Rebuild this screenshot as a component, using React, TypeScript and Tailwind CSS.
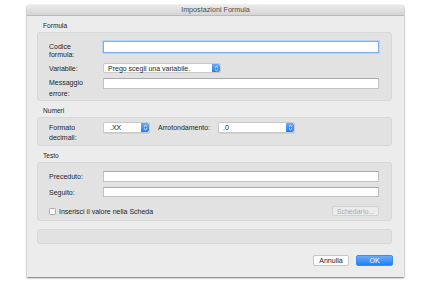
import React from "react";

const font = { fontFamily: '"Liberation Sans", Arial, sans-serif' };

function Stepper() {
  return (
    <div className="w-[8px] h-full bg-gradient-to-b from-[#6aaaf7] to-[#1c7ff4] rounded-r-[2px] flex items-center justify-center">
      <svg width="5" height="7" viewBox="0 0 5 7">
        <path d="M1 2.6 L2.5 1.2 L4 2.6" stroke="white" strokeWidth="0.8" fill="none" />
        <path d="M1 4.4 L2.5 5.8 L4 4.4" stroke="white" strokeWidth="0.8" fill="none" />
      </svg>
    </div>
  );
}

function Select({ text, w, pl }: { text: string; w: string; pl: string }) {
  return (
    <div className={`${w} h-[11px] flex bg-white border border-[#c9c9c9] rounded-[2px] shadow-[0_0.5px_0.5px_rgba(0,0,0,0.15)]`}>
      <div className={`flex-1 flex items-center ${pl} text-[7px] text-[#1a1a1a] leading-none`}>{text}</div>
      <Stepper />
    </div>
  );
}

function Input({ h = "h-[11px]" }: { h?: string }) {
  return <div className={`flex-1 ${h} bg-white border border-[#c2c2c2] border-t-[#a9a9a9]`} />;
}

export default function App() {
  return (
    <div className="w-[432px] h-[287px] bg-white overflow-hidden" style={font}>
      <div className="ml-[27px] mt-[5px] w-[377px] h-[272px] bg-[#ececec] flex flex-col shadow-[0_1px_2px_rgba(0,0,0,0.55),0_0_1px_rgba(0,0,0,0.3)] rounded-t-[3px]">
        <div className="h-[11px] bg-gradient-to-b from-[#ebebeb] to-[#d5d5d5] border-b border-[#b9b9b9] flex items-center justify-center text-[7.2px] text-[#4d4d4d] leading-none rounded-t-[3px]">
          Impostazioni Formula
        </div>
        <div className="pl-[10px] pr-[12px] flex flex-col text-[#1e1e1e]">
          <div className="h-[16px] flex items-end pb-[2px] pl-[6px] text-[6.6px] leading-none">Formula</div>
          <div className="h-[69px] bg-[#e2e2e2] border border-[#d8d8d8] rounded-[3px] pt-[8px] pl-[11px] pr-[12px] flex flex-col">
            <div className="h-[12px] flex">
              <div className="w-[54px] text-[7px] leading-[7.5px] pt-[2px]">
                Codice
                <br />
                formula:
              </div>
              <div className="flex-1 h-[12px] bg-white border border-[#7eaeee] shadow-[0_0_0_1px_#b6d3f8]" />
            </div>
            <div className="h-[10px] mt-[10px] flex items-center">
              <div className="w-[54px] text-[7px] leading-none">Variabile:</div>
              <div className="w-[118px] h-[10px] flex bg-white border border-[#c9c9c9] rounded-[2px]">
                <div className="flex-1 flex items-center pl-[4px] text-[7px] leading-none">Prego scegli una variabile.</div>
                <Stepper />
              </div>
            </div>
            <div className="h-[11px] mt-[5px] flex">
              <div className="w-[54px] text-[7px] leading-[11px] -mt-[1px]">
                Messaggio
                <br />
                errore:
              </div>
              <Input />
            </div>
          </div>

          <div className="h-[16px] flex items-end pb-[2px] pl-[6px] text-[6.6px] leading-none">Numeri</div>
          <div className="h-[29px] bg-[#e2e2e2] border border-[#d8d8d8] rounded-[3px] pt-[4px] pl-[11px] flex">
            <div className="w-[54px] text-[7px] leading-[10px] pt-[1px]">
              Formato
              <br />
              decimali:
            </div>
            <Select text=".XX" w="w-[47px]" pl="pl-[6px]" />
            <div className="ml-[8px] w-[60px] h-[11px] flex items-center text-[7px] leading-none">Arrotondamento:</div>
            <Select text=".0" w="w-[77px]" pl="pl-[4px]" />
          </div>

          <div className="h-[16px] flex items-end pb-[2px] pl-[6px] text-[6.6px] leading-none">Testo</div>
          <div className="h-[59px] bg-[#e2e2e2] border border-[#d8d8d8] rounded-[3px] pt-[8px] pl-[11px] pr-[12px] flex flex-col">
            <div className="h-[11px] flex items-center">
              <div className="w-[54px] text-[7px] leading-none">Preceduto:</div>
              <Input />
            </div>
            <div className="h-[10px] mt-[5px] flex items-center">
              <div className="w-[54px] text-[7px] leading-none">Seguito:</div>
              <Input h="h-[10px]" />
            </div>
            <div className="h-[10px] mt-[9px] flex items-center">
              <div className="w-[7px] h-[7px] bg-white border border-[#a8a8a8] rounded-[1.5px]" />
              <div className="ml-[3px] text-[7px] leading-none">Inserisci il valore nella Scheda</div>
              <div className="ml-auto w-[47px] h-[10px] border border-[#d2d2d2] bg-[#ececec] rounded-[2px] flex items-center justify-center text-[7px] leading-none text-[#a9a9a9]">
                Schedario...
              </div>
            </div>
          </div>

          <div className="mt-[8px] h-[15px] bg-[#e2e2e2] border border-[#d8d8d8] rounded-[3px]" />

          <div className="mt-[11px] h-[11px] flex justify-end pr-[-1px]">
            <div className="w-[36px] h-[11px] bg-white border border-[#c6c6c6] rounded-[2px] flex items-center justify-center text-[7px] leading-none text-[#222]">
              Annulla
            </div>
            <div className="ml-[7px] -mr-[1px] w-[37px] h-[11px] bg-gradient-to-b from-[#6aaaf8] to-[#1c80f5] border border-[#3d8ef0] rounded-[2px] flex items-center justify-center text-[7px] leading-none text-white">
              OK
            </div>
          </div>
        </div>
      </div>
    </div>
  );
}
